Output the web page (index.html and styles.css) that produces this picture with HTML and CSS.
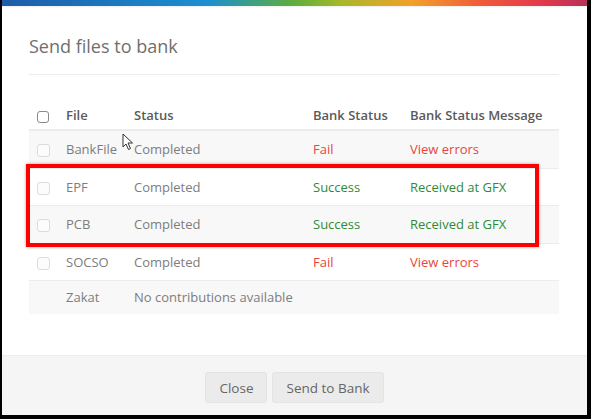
FILE: index.html
```html
<!DOCTYPE html>
<html lang="en">
<head>
    <meta charset="UTF-8">
    <title>Send files to bank</title>
    <link rel="stylesheet" href="styles.css">
</head>
<body>
    <div class="modal">
        <div class="top-bar"></div>

        <div class="modal-body">
            <h2 class="modal-title">Send files to bank</h2>

            <div class="table-wrap">
                <table class="files">
                    <thead>
                        <tr>
                            <th class="col-check"><span class="check check-head"></span></th>
                            <th class="col-file">File</th>
                            <th class="col-status">Status</th>
                            <th class="col-bank">Bank Status</th>
                            <th>Bank Status Message</th>
                        </tr>
                    </thead>
                    <tbody>
                        <tr>
                            <td><span class="check"></span></td>
                            <td>BankFile</td>
                            <td>Completed</td>
                            <td class="fail">Fail</td>
                            <td class="fail">View errors</td>
                        </tr>
                        <tr>
                            <td><span class="check"></span></td>
                            <td>EPF</td>
                            <td>Completed</td>
                            <td class="ok">Success</td>
                            <td class="ok">Received at GFX</td>
                        </tr>
                        <tr>
                            <td><span class="check"></span></td>
                            <td>PCB</td>
                            <td>Completed</td>
                            <td class="ok">Success</td>
                            <td class="ok">Received at GFX</td>
                        </tr>
                        <tr>
                            <td><span class="check"></span></td>
                            <td>SOCSO</td>
                            <td>Completed</td>
                            <td class="fail">Fail</td>
                            <td class="fail">View errors</td>
                        </tr>
                        <tr class="short">
                            <td></td>
                            <td>Zakat</td>
                            <td colspan="3">No contributions available</td>
                        </tr>
                    </tbody>
                </table>

                <!-- annotation drawn over the screenshot -->
                <div class="highlight"></div>

                <svg class="cursor" width="12" height="18" viewBox="0 0 12 18">
                    <path d="M1 1 L1 14 L4 11 L6.5 16.5 L8.5 15.5 L6 10 L10.5 10 Z" fill="#fff" stroke="#333" stroke-width="1" stroke-linejoin="round"/>
                </svg>
            </div>
        </div>

        <div class="modal-footer">
            <button class="btn">Close</button>
            <button class="btn">Send to Bank</button>
        </div>
    </div>
</body>
</html>
```

FILE: styles.css
```css
body {
    margin: 0;
    padding: 0;
    background-color: #000;
    font-family: "Open Sans", "Liberation Sans", sans-serif;
}

.modal {
    margin: 0 4px 0 2px;
    height: 415px;
    background-color: #fff;
    display: flex;
    flex-direction: column;
}

.top-bar {
    height: 6px;
    background: linear-gradient(to right, #1d5ca8 0%, #1b8fd2 35%, #5fae3c 50%, #a8b82a 58%, #f2a12a 70%, #ef5a3a 82%, #e33a4c 92%, #b83058 100%);
    box-shadow: 0 1px 2px rgba(0, 0, 0, 0.08);
}

.modal-body {
    flex: 1;
    padding: 0 28px 0 27px;
}

.modal-title {
    margin: 0;
    padding: 28px 0 16px;
    font-size: 18px;
    font-weight: 400;
    line-height: 24px;
    color: #6f6f6f;
    border-bottom: 1px solid #ececec;
}

.table-wrap {
    position: relative;
    margin-top: 17px;
}

.files {
    width: 100%;
    border-collapse: collapse;
    font-size: 13px;
    color: #7d7d7d;
    text-align: left;
}

.files th {
    padding: 13px 8px 4px;
    line-height: 20px;
    font-weight: 600;
    color: #5a5a5a;
    border-bottom: 2px solid #ececec;
}

.files td {
    padding: 8px;
    line-height: 20.5px;
    border-top: 1px solid #ececec;
    vertical-align: middle;
}

.files tbody tr:nth-child(odd) {
    background-color: #f8f8f8;
}

.files tr.short td {
    line-height: 17px;
}

.col-check { width: 13px; }
.col-file { width: 52px; }
.col-status { width: 163px; }
.col-bank { width: 81px; }

.check {
    display: inline-block;
    width: 11px;
    height: 11px;
    border: 1px solid #dcdcdc;
    border-radius: 3px;
    background-color: #fcfcfc;
    vertical-align: middle;
}

.check-head {
    border: 1.5px solid #8a8a8a;
    background-color: #fff;
    width: 10px;
    height: 10px;
}

.fail {
    color: #e8453c;
}

.ok {
    color: #2f8a35;
}

.highlight {
    position: absolute;
    left: -3px;
    top: 72px;
    width: 505px;
    height: 75px;
    border: 4px solid #f00;
    box-shadow: 0 0 3px rgba(0, 0, 0, 0.35);
    pointer-events: none;
}

.cursor {
    position: absolute;
    left: 93px;
    top: 41px;
}

.modal-footer {
    background-color: #f5f5f5;
    border-top: 1px solid #ececec;
    padding: 16px 0 12px;
    display: flex;
    justify-content: center;
    gap: 5px;
}

.btn {
    height: 31px;
    padding: 0 13px;
    font-family: "Open Sans", "Liberation Sans", sans-serif;
    font-size: 13.5px;
    color: #666;
    background-color: #ebebeb;
    border: 1px solid #e4e4e4;
    border-radius: 3px;
}
```
